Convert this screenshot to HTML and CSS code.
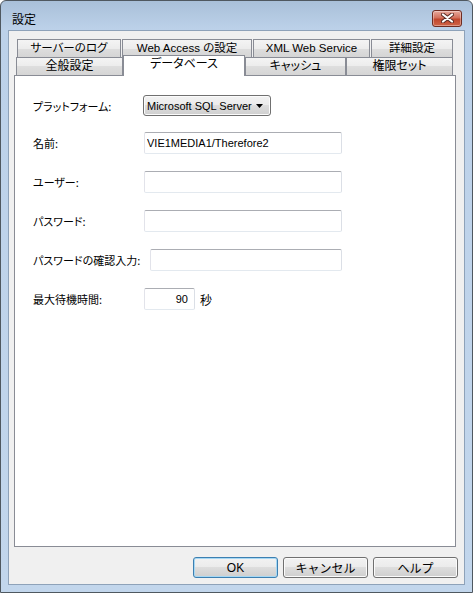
FILE: index.html
```html
<!DOCTYPE html>
<html lang="ja">
<head>
    <meta charset="UTF-8">
    <title>設定</title>
    <link rel="stylesheet" href="styles.css">
</head>
<body>
    <div class="window">
        <div class="titlebar">
            <span class="title">設定</span>
            <div class="close">
                <svg width="13" height="10" viewBox="0 0 13 10">
                    <path d="M2 1.5 L11 8.5 M11 1.5 L2 8.5" stroke="#5a2b24" stroke-width="4" stroke-linecap="round"/>
                    <path d="M2 1.5 L11 8.5 M11 1.5 L2 8.5" stroke="#fff" stroke-width="2.2" stroke-linecap="round"/>
                </svg>
            </div>
        </div>
        <div class="client">
            <div class="tabs">
                <div class="tab-row back">
                    <div class="tab w1">サーバーのログ</div>
                    <div class="tab w2">Web Access の設定</div>
                    <div class="tab w3">XML Web Service</div>
                    <div class="tab w4">詳細設定</div>
                </div>
                <div class="tab-row front">
                    <div class="tab w5">全般設定</div>
                    <div class="tab w6 active">データベース</div>
                    <div class="tab w7">キャッシュ</div>
                    <div class="tab w8">権限セット</div>
                </div>
            </div>
            <div class="panel">
                <div class="row row-platform">
                    <label class="label">プラットフォーム:</label>
                    <div class="combo">
                        <span>Microsoft SQL Server</span>
                        <svg width="7" height="4" viewBox="0 0 7 4"><path d="M0 0 H7 L3.5 4 Z" fill="#000"/></svg>
                    </div>
                </div>
                <div class="row">
                    <label class="label">名前:</label>
                    <input class="text" type="text" value="VIE1MEDIA1/Therefore2">
                </div>
                <div class="row">
                    <label class="label">ユーザー:</label>
                    <input class="text" type="text">
                </div>
                <div class="row">
                    <label class="label">パスワード:</label>
                    <input class="text" type="password">
                </div>
                <div class="row">
                    <label class="label label-wide">パスワードの確認入力:</label>
                    <input class="text text-short" type="password">
                </div>
                <div class="row">
                    <label class="label">最大待機時間:</label>
                    <input class="text text-num" type="text" value="90">
                    <span class="unit">秒</span>
                </div>
            </div>
            <div class="buttons">
                <button class="btn default">OK</button>
                <button class="btn">キャンセル</button>
                <button class="btn">ヘルプ</button>
            </div>
        </div>
    </div>
</body>
</html>
```

FILE: styles.css
```css
html, body {
    margin: 0;
    padding: 0;
}
body {
    width: 473px;
    height: 593px;
    font-family: "Liberation Sans", "Noto Sans CJK JP", sans-serif;
    font-size: 12px;
    color: #000;
    background-color: #fff;
    font-feature-settings: "palt";
}
.window {
    box-sizing: border-box;
    width: 473px;
    height: 593px;
    border: 1px solid #4f5860;
    border-radius: 6px 6px 0 0;
    background: linear-gradient(#a9c0d9 0, #bcd1e9 28px, #c2d6ec 100%);
    padding: 0 7px 7px;
    display: flex;
    flex-direction: column;
}
.titlebar {
    height: 29px;
    display: flex;
    align-items: center;
    justify-content: space-between;
    padding: 5px 3px 0 4px;
    box-sizing: border-box;
}
.title {
    font-family: "Noto Sans CJK JP", sans-serif;
    font-size: 12px;
}
.close {
    box-sizing: border-box;
    width: 30px;
    height: 17px;
    border: 1px solid #6e2c22;
    border-radius: 3px;
    background: linear-gradient(#e7a99d 0%, #d2705c 45%, #c0462d 55%, #cf6447 100%);
    box-shadow: inset 0 0 0 1px rgba(255,255,255,0.35);
    display: flex;
    align-items: center;
    justify-content: center;
}
.client {
    flex: 1;
    background-color: #f0f0f0;
    border: 1px solid #8ea2b9;
    padding: 8px 0 0 5px;
}
.tabs {
    width: 442px;
}
.tab-row {
    display: flex;
}
.tab-row.back {
    padding-left: 3px;
    gap: 1px;
}
.tab-row.front {
    padding-left: 2px;
}
.tab {
    box-sizing: border-box;
    height: 18px;
    border: 1px solid #898c95;
    border-bottom: none;
    background: linear-gradient(#f4f4f4 0%, #ececec 50%, #dedede 50%, #d5d5d5 100%);
    text-align: center;
    line-height: 16px;
    font-size: 12px;
    white-space: nowrap;
}
.tab-row.back .tab {
    font-size: 11.5px;
}
.w1 { width: 104px; }
.w2 { width: 130px; }
.w3 { width: 117px; }
.w4 { width: 82px; }
.w5 { width: 107px; }
.w6 { width: 122px; }
.w7 { width: 101px; }
.w8 { width: 107px; }
.tab.active {
    position: relative;
    z-index: 1;
    height: 21px;
    margin-top: -2px;
    margin-bottom: -1px;
    background: #fff;
    line-height: 17px;
}
.panel {
    box-sizing: border-box;
    width: 442px;
    height: 472px;
    border: 1px solid #898c95;
    background-color: #fff;
    padding: 19px 0 0 18px;
}
.row {
    display: flex;
    align-items: center;
    height: 22px;
    margin-bottom: 17px;
}
.row-platform {
    height: 21px;
    margin-bottom: 16px;
}
.label {
    width: 111px;
    flex: none;
    font-family: "Noto Sans CJK JP", sans-serif;
    font-size: 11px;
}
.label-wide {
    width: 117px;
}
.combo {
    box-sizing: border-box;
    width: 128px;
    height: 21px;
    margin-left: -1px;
    border: 1px solid #707070;
    border-radius: 3px;
    background: linear-gradient(#f2f2f2 0%, #ebebeb 50%, #dddddd 50%, #cfcfcf 100%);
    box-shadow: inset 0 0 0 1px #fbfbfb;
    display: flex;
    align-items: center;
    justify-content: space-between;
    padding: 0 7px 0 3px;
    font-size: 11px;
}
.text {
    box-sizing: border-box;
    width: 198px;
    height: 22px;
    margin: 0;
    border: 1px solid;
    border-color: #abadb3 #dbdfe6 #e3e9ef #e2e3ea;
    border-radius: 2px;
    padding: 0 2px;
    font-family: "Liberation Sans", sans-serif;
    font-size: 11px;
    color: #000;
    background: #fff;
    outline: none;
}
.text-short {
    width: 192px;
}
.text-num {
    width: 51px;
    text-align: right;
    padding-right: 6px;
}
.unit {
    margin-left: 5px;
    font-family: "Noto Sans CJK JP", sans-serif;
}
.buttons {
    display: flex;
    justify-content: flex-end;
    gap: 5px;
    margin-top: 10px;
    padding-right: 6px;
}
.btn {
    box-sizing: border-box;
    width: 85px;
    height: 21px;
    margin: 0;
    padding: 0;
    border: 1px solid #707070;
    border-radius: 3px;
    background: linear-gradient(#f2f2f2 0%, #ebebeb 50%, #dddddd 50%, #cfcfcf 100%);
    box-shadow: inset 0 0 0 1px #fbfbfb;
    font-family: "Liberation Sans", "Noto Sans CJK JP", sans-serif;
    font-size: 12px;
    color: #000;
}
.btn.default {
    border-color: #3c7fb1;
    box-shadow: inset 0 0 0 1px #a6d8f4;
}
```
